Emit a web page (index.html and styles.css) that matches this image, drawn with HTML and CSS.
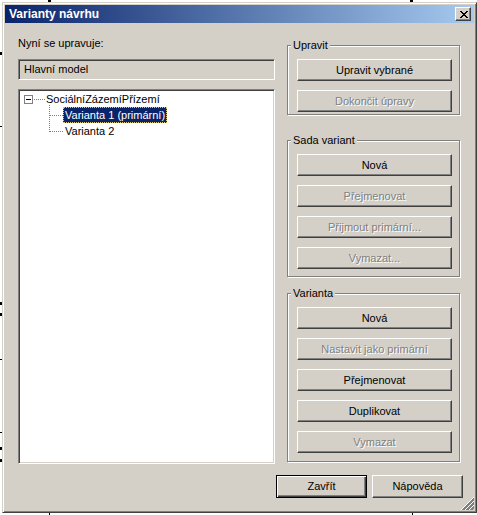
FILE: index.html
```html
<!DOCTYPE html>
<html lang="cs">
<head>
<meta charset="utf-8">
<title>Varianty návrhu</title>
<link rel="stylesheet" href="styles.css">
</head>
<body>
<div class="desk">
  <span class="mk m1"></span><span class="mk m2"></span><span class="mk m3"></span><span class="mk m4"></span>
  <span class="mk m5"></span><span class="mk m6"></span><span class="mk m7"></span><span class="mk m8"></span>
  <span class="mk m9"></span><span class="mk m10"></span><span class="mk m11"></span><span class="mk m12"></span>
</div>
<div class="window">
  <div class="titlebar">
    <span class="title">Varianty návrhu</span>
    <span class="close">
      <svg width="8" height="7" viewBox="0 0 8 7" shape-rendering="crispEdges">
        <path d="M0 0h2v1H0zM6 0h2v1H6zM1 1h2v1H1zM5 1h2v1H5zM2 2h4v1H2zM3 3h2v1H3zM2 4h4v1H2zM1 5h2v1H1zM5 5h2v1H5zM0 6h2v1H0zM6 6h2v1H6z" fill="#000"/>
      </svg>
    </span>
  </div>
  <div class="client">
    <div class="main">
      <div class="left">
        <div class="label">Nyní se upravuje:</div>
        <div class="edit">Hlavní model</div>
        <div class="tree">
          <svg class="tree-lines" width="60" height="50" viewBox="0 0 60 50" shape-rendering="crispEdges">
            <g stroke="#808080" stroke-width="1" stroke-dasharray="1 1" fill="none">
              <line x1="15" y1="9.5" x2="26" y2="9.5"/>
              <line x1="30.5" y1="15" x2="30.5" y2="42"/>
              <line x1="31" y1="25.5" x2="44" y2="25.5"/>
              <line x1="31" y1="41.5" x2="44" y2="41.5"/>
            </g>
            <rect x="5.5" y="5.5" width="8" height="8" fill="#fff" stroke="#808080"/>
            <line x1="7" y1="9.5" x2="12" y2="9.5" stroke="#000"/>
          </svg>
          <div class="node root"><span class="txt">SociálníZázemíPřízemí</span></div>
          <div class="node child"><span class="txt sel">Varianta 1 (primární)</span></div>
          <div class="node child"><span class="txt">Varianta 2</span></div>
        </div>
      </div>
      <div class="right">
        <div class="group g1">
          <span class="legend">Upravit</span>
          <div class="btn">Upravit vybrané</div>
          <div class="btn dis">Dokončit úpravy</div>
        </div>
        <div class="group g2">
          <span class="legend">Sada variant</span>
          <div class="btn">Nová</div>
          <div class="btn dis">Přejmenovat</div>
          <div class="btn dis">Přijmout primární...</div>
          <div class="btn dis">Vymazat...</div>
        </div>
        <div class="group g3">
          <span class="legend">Varianta</span>
          <div class="btn">Nová</div>
          <div class="btn dis">Nastavit jako primární</div>
          <div class="btn">Přejmenovat</div>
          <div class="btn">Duplikovat</div>
          <div class="btn dis">Vymazat</div>
        </div>
      </div>
    </div>
    <div class="footer">
      <div class="btn small default">Zavřít</div>
      <div class="btn small">Nápověda</div>
    </div>
    <svg class="grip" width="13" height="13" viewBox="0 0 13 13" shape-rendering="crispEdges">
      <g stroke-width="1">
        <line x1="13" y1="0.5" x2="0.5" y2="13" stroke="#fff"/>
        <line x1="13" y1="1.5" x2="1.5" y2="13" stroke="#808080"/>
        <line x1="13" y1="2.5" x2="2.5" y2="13" stroke="#808080"/>
        <line x1="13" y1="4.5" x2="4.5" y2="13" stroke="#fff"/>
        <line x1="13" y1="5.5" x2="5.5" y2="13" stroke="#808080"/>
        <line x1="13" y1="6.5" x2="6.5" y2="13" stroke="#808080"/>
        <line x1="13" y1="8.5" x2="8.5" y2="13" stroke="#fff"/>
        <line x1="13" y1="9.5" x2="9.5" y2="13" stroke="#808080"/>
        <line x1="13" y1="10.5" x2="10.5" y2="13" stroke="#808080"/>
      </g>
    </svg>
  </div>
</div>
</body>
</html>
```
FILE: styles.css
```css
html, body {
  margin: 0;
  padding: 0;
}
body {
  width: 477px;
  height: 515px;
  overflow: hidden;
  position: relative;
  background: #fff;
  font-family: "Liberation Sans", Arial, sans-serif;
  font-size: 11px;
  color: #000;
  padding: 2px 0 0 2px;
  box-sizing: border-box;
}

/* background drawing marks behind the dialog */
.desk { position: absolute; left: 0; top: 0; width: 477px; height: 515px; }
.mk { position: absolute; background: #000; }
.m1 { left: 48px; top: 0; width: 3px; height: 2px; }
.m2 { left: 410px; top: 0; width: 3px; height: 2px; }
.m3 { left: 49px; top: 513px; width: 1px; height: 2px; }
.m4 { left: 412px; top: 513px; width: 1px; height: 2px; }
.m5 { left: 0; top: 52px; width: 2px; height: 3px; }
.m6 { left: 0; top: 302px; width: 2px; height: 3px; }
.m7 { left: 0; top: 313px; width: 2px; height: 3px; }
.m8 { left: 0; top: 359px; width: 2px; height: 1px; }
.m9 { left: 0; top: 432px; width: 2px; height: 1px; }
.m10 { left: 0; top: 447px; width: 2px; height: 3px; }
.m11 { left: 0; top: 459px; width: 2px; height: 3px; }
.m12 { left: 0; top: 126px; width: 2px; height: 1px; }

.window {
  position: relative;
  width: 475px;
  height: 511px;
  box-sizing: border-box;
  background: #d4d0c8;
  border: 1px solid;
  border-color: #d4d0c8 #404040 #404040 #d4d0c8;
  box-shadow: inset 1px 1px 0 #fff, inset -1px -1px 0 #808080;
  padding: 2px;
  display: flex;
  flex-direction: column;
}

.titlebar {
  height: 18px;
  flex: none;
  margin-bottom: 1px;
  background: linear-gradient(to right, #0a246a, #a6caf0);
  display: flex;
  align-items: center;
  justify-content: space-between;
  padding-left: 4px;
}
.title {
  color: #fff;
  font-weight: bold;
  font-size: 12px;
  line-height: 14px;
}
.close {
  width: 16px;
  height: 14px;
  box-sizing: border-box;
  margin-right: 3px;
  background: #d4d0c8;
  border: 1px solid;
  border-color: #fff #404040 #404040 #fff;
  box-shadow: inset -1px -1px 0 #808080;
  display: flex;
  align-items: center;
  justify-content: center;
  padding-left: 1px;
}
.close svg { display: block; }

.client {
  flex: 1;
  position: relative;
  padding: 13px 13px 0 13px;
  display: flex;
  flex-direction: column;
}

.main {
  display: flex;
  gap: 12px;
}

.left {
  width: 257px;
  display: flex;
  flex-direction: column;
}
.label {
  line-height: 13px;
  height: 13px;
}
.edit {
  margin-top: 9px;
  height: 21px;
  box-sizing: border-box;
  border: 1px solid;
  border-color: #808080 #fff #fff #808080;
  box-shadow: inset 1px 1px 0 #404040, inset -1px -1px 0 #d4d0c8;
  background: #d4d0c8;
  padding-left: 5px;
  line-height: 19px;
}
.tree {
  position: relative;
  margin-top: 9px;
  height: 375px;
  box-sizing: border-box;
  border: 1px solid;
  border-color: #808080 #fff #fff #808080;
  box-shadow: inset 1px 1px 0 #404040, inset -1px -1px 0 #d4d0c8;
  background: #fff;
  padding: 1px;
}
.tree-lines {
  position: absolute;
  left: 0;
  top: 0;
}
.node {
  height: 16px;
  line-height: 16px;
  display: flex;
}
.node.root { padding-left: 24px; }
.node.child { padding-left: 43px; }
.txt {
  padding: 0 2px;
  white-space: nowrap;
}
.txt.sel {
  background: #0a246a;
  color: #fff;
  outline: 1px dotted #d8c880;
  outline-offset: -1px;
}

.right {
  width: 173px;
  display: flex;
  flex-direction: column;
}
.group {
  position: relative;
  box-sizing: border-box;
  border: 1px solid #808080;
  box-shadow: inset 1px 1px 0 #fff, 1px 1px 0 #fff;
  padding: 13px 0 0 9px;
}
.g1 { margin-top: 8px; height: 70px; }
.g2 { margin-top: 25px; height: 137px; }
.g3 { margin-top: 16px; height: 169px; }
.legend {
  position: absolute;
  left: 3px;
  top: -7px;
  padding: 0 2px;
  line-height: 13px;
  background: #d4d0c8;
}

.btn {
  width: 155px;
  height: 22px;
  box-sizing: border-box;
  border: 1px solid;
  border-color: #fff #404040 #404040 #fff;
  box-shadow: inset -1px -1px 0 #808080;
  display: flex;
  align-items: center;
  justify-content: center;
  line-height: 13px;
  margin-bottom: 9px;
  white-space: nowrap;
}
.btn.dis {
  color: #808080;
  text-shadow: 1px 1px 0 #fff;
}

.footer {
  margin-top: 11px;
  margin-right: -2px;
  display: flex;
  justify-content: flex-end;
  gap: 5px;
}
.btn.small {
  width: 91px;
  height: 23px;
  margin-bottom: 0;
}
.btn.default {
  border: 1px solid #000;
  box-shadow: inset 1px 1px 0 #fff, inset -1px -1px 0 #404040, inset -2px -2px 0 #808080;
}

.grip {
  position: absolute;
  right: 0;
  bottom: 0;
}
```
